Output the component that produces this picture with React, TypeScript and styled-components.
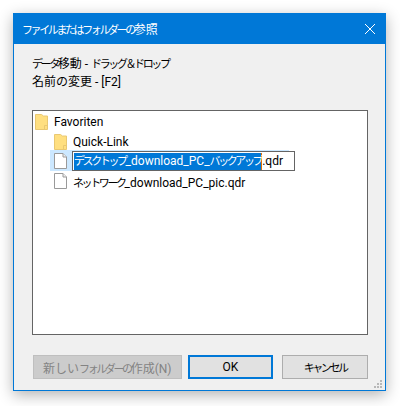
import React from "react";
import styled, {createGlobalStyle} from "styled-components";

const GlobalStyle = createGlobalStyle`
    html, body {
        margin: 0;
        padding: 0;
        background: #fff;
        height: 406px;
        overflow: hidden;
    }

    body {
        font-family: Roboto, "Noto Sans CJK JP", sans-serif;
        font-size: 12px;
    }
`;

const Page = styled.div`
    padding: 13px 14px 15px 13px;
`;

const Dialog = styled.div`
    position: relative;
    box-sizing: border-box;
    width: 373px;
    height: 378px;
    border: 1px solid #0078d7;
    background: #f0f0f0;
    box-shadow: 0 4px 14px rgba(0, 0, 0, 0.3);
    display: flex;
    flex-direction: column;
`;

const TitleBar = styled.div`
    height: 31px;
    margin: -1px -1px 0;
    padding: 0 10px 0 9px;
    background: #0078d7;
    color: #fff;
    display: flex;
    align-items: center;
    justify-content: space-between;
    flex: none;
`;

const Content = styled.div`
    flex: 1;
    display: flex;
    flex-direction: column;
    padding: 11px 17px 11px 18px;
`;

const Hint = styled.div`
    height: 18px;
    line-height: 18px;
    color: #000;
    white-space: nowrap;
`;

// the reference font has narrow kana, so kana runs are set smaller and pulled together
const Kana = styled.span`
    font-size: 11px;
    letter-spacing: -2.4px;
`;

const Tree = styled.div`
    box-sizing: border-box;
    height: 225px;
    margin-top: 19px;
    border: 1px solid #646464;
    background: #fff;
    padding: 0 0 0 2px;
`;

const Row = styled.div<{ $indent: number; $selected?: boolean }>`
    display: flex;
    align-items: center;
    gap: 6px;
    height: ${p => p.$selected ? "21px" : "20px"};
    width: ${p => p.$selected ? "235px" : "auto"};
    margin-top: ${p => p.$selected ? "-1px" : "0"};
    margin-left: ${p => p.$indent}px;
    padding-left: ${p => p.$selected ? "4px" : "0"};
    background: ${p => p.$selected ? "#cce8ff" : "transparent"};
    white-space: nowrap;
    color: #000;
`;

const RowLabel = styled.span`
    padding-top: 1px;
`;

const RenameBox = styled.div`
    box-sizing: border-box;
    flex: none;
    width: 223px;
    height: 20px;
    margin-left: -1px;
    border: 1px solid #646464;
    background: #fff;
    padding: 1px 0 0 1px;
    display: flex;
    line-height: 16px;
`;

const Selected = styled.span`
    background: #0078d7;
    color: #fff;
    border-right: 1px solid #e07000;
`;

const Buttons = styled.div`
    display: flex;
    margin-top: 20px;
    margin-left: 1px;
`;

const Button = styled.div<{ $width: number; $gap: number; $variant?: "default" | "disabled" }>`
    box-sizing: border-box;
    width: ${p => p.$width}px;
    height: 24px;
    margin-right: ${p => p.$gap}px;
    display: flex;
    align-items: center;
    justify-content: center;
    background: ${p => p.$variant === "disabled" ? "#cccccc" : "#e1e1e1"};
    color: ${p => p.$variant === "disabled" ? "#838383" : "#000"};
    border: ${p => p.$variant === "default" ? "2px solid #0078d7" : p.$variant === "disabled" ? "1px solid #bfbfbf" : "1px solid #adadad"};
    white-space: nowrap;
`;

const Grip = styled.svg`
    position: absolute;
    right: 3px;
    bottom: 2px;
`;

const CloseIcon = () => (
    <svg width="12" height="12" viewBox="0 0 12 12">
        <path d="M1 1 L11 11 M11 1 L1 11" stroke="#fff" strokeWidth="1"/>
    </svg>
);

const FolderIcon = () => (
    <svg width="13" height="17" viewBox="0 0 13 17" style={{flex: "none"}}>
        <path d="M.5 1.5 H6.5 L8.5 3 H12.5 V16.5 H.5 Z" fill="#ffdf80" stroke="#e9c872"/>
        <path d="M9.5 16 V12.5 H12.5" fill="none" stroke="#e9c872"/>
    </svg>
);

const FileIcon = () => (
    <svg width="13" height="16" viewBox="0 0 13 16" style={{flex: "none"}}>
        <path d="M.5 .5 H9 L12.5 4 V15.5 H.5 Z" fill="#fff" stroke="#9a9a9a"/>
        <path d="M9 .5 V4 H12.5" fill="#f0f0f0" stroke="#9a9a9a"/>
    </svg>
);

const GRIP_DOTS = [[6, 0], [3, 3], [6, 3], [0, 6], [3, 6], [6, 6]];

const App = () => {
    return (
        <>
            <GlobalStyle/>
            <Page>
                <Dialog>
                    <TitleBar>
                        <span><Kana>ファイルまたはフォルダーの</Kana>参照</span>
                        <CloseIcon/>
                    </TitleBar>
                    <Content>
                        <Hint><Kana>データ</Kana>移動 - <Kana>ドラッグ＆ドロップ</Kana></Hint>
                        <Hint>名前の変更 - [F2]</Hint>
                        <Tree>
                            <Row $indent={0}><FolderIcon/><RowLabel>Favoriten</RowLabel></Row>
                            <Row $indent={19}><FolderIcon/><RowLabel>Quick-Link</RowLabel></Row>
                            <Row $indent={15} $selected>
                                <FileIcon/>
                                <RenameBox>
                                    <Selected><Kana>デスクトップ</Kana>_download_PC_<Kana>バックアップ</Kana></Selected>.qdr
                                </RenameBox>
                            </Row>
                            <Row $indent={19}><FileIcon/><RowLabel><Kana>ネットワーク</Kana>_download_PC_pic.qdr</RowLabel></Row>
                        </Tree>
                        <Buttons>
                            <Button $width={149} $gap={6} $variant="disabled"><span>新しい<Kana>フォルダーの</Kana>作成(N)</span></Button>
                            <Button $width={86} $gap={9} $variant="default">OK</Button>
                            <Button $width={86} $gap={0}><Kana>キャンセル</Kana></Button>
                        </Buttons>
                    </Content>
                    <Grip width="8" height="8" viewBox="0 0 8 8">
                        {GRIP_DOTS.map(([x, y]) => <rect key={`${x}-${y}`} x={x} y={y} width="2" height="2" fill="#b8b8b8"/>)}
                    </Grip>
                </Dialog>
            </Page>
        </>
    );
};

export default App;
